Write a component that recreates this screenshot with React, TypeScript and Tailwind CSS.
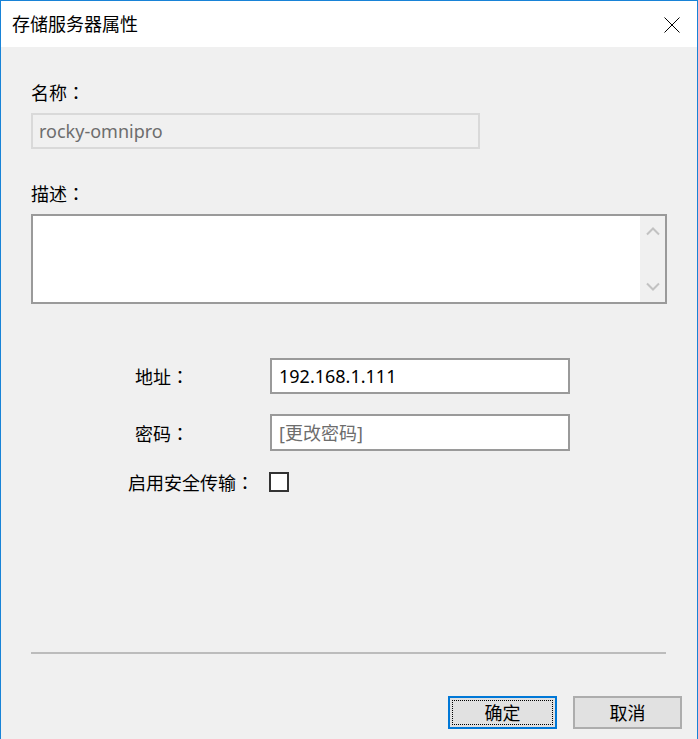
import React from "react";

const font = { fontFamily: '"Noto Sans", "Noto Sans CJK SC", sans-serif' };
const colonFont = { fontFamily: '"Noto Sans CJK TC", "Noto Sans CJK JP", sans-serif' };

function Colon() {
  return <span style={colonFont}>：</span>;
}

export default function App() {
  return (
    <div
      className="w-[698px] h-[739px] box-border border-l border-r border-t border-[#1883d7] bg-[#f0f0f0] flex flex-col overflow-hidden text-[#000]"
      style={font}
    >
      {/* title bar */}
      <div className="h-[46px] shrink-0 bg-white flex items-center justify-between pl-[11px] pr-[17px]">
        <span className="text-[18px] leading-[24px] text-black">存储服务器属性</span>
        <svg width="16" height="16" viewBox="0 0 16 16" className="mt-[1px]">
          <path d="M0.5 0.5 L15.5 15.5 M15.5 0.5 L0.5 15.5" stroke="#000" strokeWidth="1" fill="none" />
        </svg>
      </div>

      {/* body */}
      <div className="flex flex-col px-[30px]">
        <div className="mt-[33px] h-[24px] leading-[24px] text-[18px]">名称<Colon /></div>
        <div className="mt-[9px] w-[449px] h-[36px] border-2 border-[#d9d9d9] bg-[#f0f0f0] flex items-center px-[6px]">
          <span className="text-[18px] leading-[24px] text-[#6d6d6d]">rocky-omnipro</span>
        </div>

        <div className="mt-[32px] h-[24px] leading-[24px] text-[18px]">描述<Colon /></div>
        <div className="mt-[9px] w-[636px] h-[90px] border-2 border-[#9a9a9a] bg-white flex justify-end">
          <div className="w-[25px] h-full bg-[#f0f0f0] flex flex-col items-center justify-between py-[11px]">
            <svg width="14" height="9" viewBox="0 0 14 9">
              <path d="M1 7.5 L7 1.5 L13 7.5" stroke="#c2c2c2" strokeWidth="2" fill="none" />
            </svg>
            <svg width="14" height="9" viewBox="0 0 14 9">
              <path d="M1 1.5 L7 7.5 L13 1.5" stroke="#c2c2c2" strokeWidth="2" fill="none" />
            </svg>
          </div>
        </div>

        {/* address */}
        <div className="mt-[54px] flex items-center">
          <div className="w-[239px] pl-[104px] h-[24px] text-[18px] leading-[24px]">地址<Colon /></div>
          <div className="w-[300px] h-[36px] border-2 border-[#9a9a9a] bg-white flex items-center px-[7px]">
            <span className="text-[18px] leading-[24px] text-black">192.168.1.111</span>
          </div>
        </div>

        {/* password */}
        <div className="mt-[20px] flex items-center">
          <div className="w-[239px] pl-[104px] h-[24px] text-[18px] leading-[24px]">密码<Colon /></div>
          <div className="w-[300px] h-[37px] border-2 border-[#9a9a9a] bg-white flex items-center px-[7px]">
            <span className="text-[18px] leading-[24px] text-[#6d6d6d]">[更改密码]</span>
          </div>
        </div>

        {/* secure */}
        <div className="mt-[19px] h-[24px] flex items-center">
          <div className="w-[238px] pl-[97px] h-[24px] text-[18px] leading-[24px]">启用安全传输<Colon /></div>
          <div className="w-[20px] h-[20px] border-2 border-[#333333] bg-white" />
        </div>

        <div className="mt-[158px] w-[635px] h-[2px] bg-[#bcbcbc]" />
      </div>

      {/* buttons */}
      <div className="mt-[42px] flex justify-end gap-[16px] pr-[15px]">
        <button className="w-[109px] h-[33px] border-2 border-[#0078d7] bg-[#e1e1e1] p-[2px] text-[18px] leading-[24px]">
          <div className="w-full h-full border border-dotted border-black flex items-center justify-center">确定</div>
        </button>
        <button className="w-[109px] h-[33px] border-2 border-[#adadad] bg-[#e1e1e1] flex items-center justify-center text-[18px] leading-[24px]">
          取消
        </button>
      </div>
    </div>
  );
}
